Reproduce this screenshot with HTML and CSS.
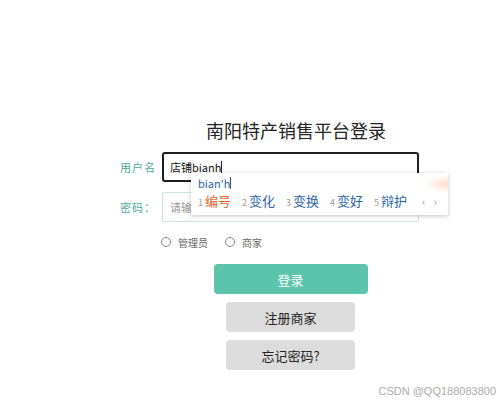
FILE: index.html
```html
<!DOCTYPE html>
<html>
<head>
    <meta charset="utf-8">
    <title>南阳特产销售平台登录</title>
    <link rel="stylesheet" href="styles.css">
</head>
<body>
    <div class="login">
        <h1 class="title">南阳特产销售平台登录</h1>

        <div class="row">
            <label class="label">用户名</label>
            <div class="field active">店铺bianh<span class="caret"></span></div>
        </div>

        <div class="row">
            <label class="label">密码：</label>
            <div class="field placeholder">请输入密码</div>
        </div>

        <div class="roles">
            <span class="radio"></span><span class="role">管理员</span>
            <span class="radio"></span><span class="role">商家</span>
        </div>

        <div class="buttons">
            <button class="btn primary">登录</button>
            <button class="btn plain">注册商家</button>
            <button class="btn plain">忘记密码?</button>
        </div>
    </div>

    <!-- 输入法候选框 -->
    <div class="ime">
        <div class="ime-code">bian'h<span class="ime-caret"></span></div>
        <div class="ime-list">
            <span class="num">1</span><span class="cand first">编号</span>
            <span class="num">2</span><span class="cand">变化</span>
            <span class="num">3</span><span class="cand">变换</span>
            <span class="num">4</span><span class="cand">变好</span>
            <span class="num">5</span><span class="cand">辩护</span>
            <span class="pager">‹ ›</span>
        </div>
        <div class="glow"></div>
    </div>

    <div class="mark">CSDN @QQ188083800</div>
</body>
</html>
```

FILE: styles.css
```css
body {
    margin: 0;
    background: #fff;
    font-family: "Microsoft YaHei", "Noto Sans CJK SC", sans-serif;
}
.login {
    width: 299px;
    margin-left: 120px;
    padding-top: 118px;
}
.title {
    margin: 0 0 10px 0;
    padding-left: 53px;
    text-align: center;
    font-size: 18px;
    line-height: 24px;
    font-weight: normal;
    color: #222;
}
.row {
    display: flex;
    align-items: center;
    margin-bottom: 10px;
}
.label {
    width: 42px;
    font-size: 11px;
    color: #4fa89c;
    letter-spacing: 1px;
}
.field {
    box-sizing: border-box;
    width: 257px;
    height: 30px;
    padding-left: 7px;
    display: flex;
    align-items: center;
    font-size: 11px;
    color: #111;
    border: 1px solid #c7e6df;
    border-radius: 2px;
}
.field.active {
    border: 2px solid #1e1e1e;
    border-radius: 3px;
    padding-left: 6px;
}
.field.placeholder {
    color: #999;
}
.caret {
    display: inline-block;
    width: 1px;
    height: 13px;
    background: #222;
}
.roles {
    display: flex;
    align-items: center;
    height: 14px;
    margin-top: 13px;
    padding-left: 41px;
    font-size: 10px;
    color: #666;
}
.radio {
    box-sizing: border-box;
    width: 10px;
    height: 10px;
    border: 1px solid #888;
    border-radius: 50%;
    margin-right: 7px;
}
.role {
    margin-right: 17px;
}
.buttons {
    display: flex;
    flex-direction: column;
    align-items: center;
    gap: 8px;
    margin-top: 15px;
    padding-left: 42px;
}
.btn {
    height: 30px;
    border: none;
    border-radius: 4px;
    font-family: inherit;
    font-size: 13px;
    cursor: pointer;
}
.btn.primary {
    width: 154px;
    background: #5cc4aa;
    color: #fff;
}
.btn.plain {
    width: 129px;
    background: #dcdcdc;
    color: #222;
}
.ime {
    position: absolute;
    left: 191px;
    top: 173px;
    width: 257px;
    height: 42px;
    background: #fff;
    box-shadow: 0 1px 4px rgba(0,0,0,0.25);
    overflow: hidden;
}
.ime-code {
    display: flex;
    align-items: center;
    margin: 3px 0 0 7px;
    font-size: 11px;
    line-height: 14px;
    color: #2a64a8;
}
.ime-caret {
    width: 1px;
    height: 12px;
    background: #555;
}
.ime-list {
    display: flex;
    align-items: baseline;
    margin: 2px 0 0 7px;
    line-height: 18px;
}
.num {
    font-size: 9px;
    color: #999;
    margin-right: 2px;
}
.cand {
    font-size: 13px;
    color: #2a64a8;
    margin-right: 11px;
}
.cand.first {
    color: #e0662a;
}
.pager {
    font-size: 11px;
    color: #999;
    margin-left: 4px;
    letter-spacing: 3px;
}
.glow {
    position: absolute;
    right: 0;
    top: 2px;
    width: 24px;
    height: 18px;
    background: radial-gradient(ellipse at right, rgba(240,150,110,0.35), rgba(255,255,255,0) 70%);
}
.mark {
    position: absolute;
    right: 3px;
    top: 385px;
    font-family: "Liberation Sans", Arial, sans-serif;
    font-size: 11px;
    color: #aaa;
}
```
